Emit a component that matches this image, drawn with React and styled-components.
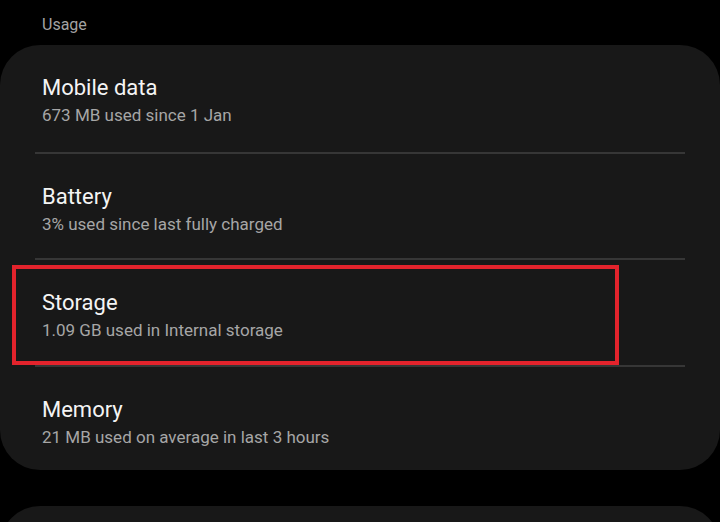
import React from "react";
import styled, { createGlobalStyle } from "styled-components";

const Global = createGlobalStyle`
  html, body { margin: 0; padding: 0; background: #000; }
  body { font-family: Roboto, "Noto Sans", "Liberation Sans", sans-serif; overflow: hidden; }
`;

const Page = styled.div`
  width: 720px;
  height: 522px;
  background: #000;
  overflow: hidden;
`;

const SectionLabel = styled.div`
  height: 45px;
  padding-left: 42px;
  box-sizing: border-box;
  display: flex;
  align-items: center;
  padding-top: 4px;
  color: #a3a3a3;
  font-size: 16px;
`;

const Card = styled.div`
  background: #181818;
  border-radius: 40px;
  margin: ${(p) => (p.$gap ? "36px" : "0")} 0 0 0;
  height: ${(p) => (p.$height ? `${p.$height}px` : "auto")};
`;

const Row = styled.div`
  position: relative;
  height: ${(p) => p.$height}px;
  box-sizing: border-box;
  padding: 29px 42px 0;
  display: flex;
  flex-direction: column;
  gap: 3px;
`;

const Divider = styled.div`
  height: 2px;
  margin: 0 35px;
  background: #363636;
`;

const Title = styled.div`
  color: #f4f4f4;
  font-size: 22px;
  line-height: 28px;
`;

const Subtitle = styled.div`
  color: #a6a6a6;
  font-size: 17px;
  line-height: 20px;
`;

const Highlight = styled.div`
  position: absolute;
  left: 12px;
  top: 5px;
  width: 607px;
  height: 100px;
  box-sizing: border-box;
  border: 4px solid #e3232c;
  pointer-events: none;
`;

const items = [
  { title: "Mobile data", sub: "673 MB used since 1 Jan", h: 107 },
  { title: "Battery", sub: "3% used since last fully charged", h: 104 },
  { title: "Storage", sub: "1.09 GB used in Internal storage", h: 105, mark: true },
  { title: "Memory", sub: "21 MB used on average in last 3 hours", h: 103 },
];

export default function App() {
  return (
    <Page>
      <Global />
      <SectionLabel>Usage</SectionLabel>
      <Card>
        {items.map((it, i) => (
          <React.Fragment key={it.title}>
            {i > 0 && <Divider />}
            <Row $height={it.h}>
              <Title>{it.title}</Title>
              <Subtitle>{it.sub}</Subtitle>
              {it.mark && <Highlight />}
            </Row>
          </React.Fragment>
        ))}
      </Card>
      <Card $gap $height={80} />
    </Page>
  );
}
